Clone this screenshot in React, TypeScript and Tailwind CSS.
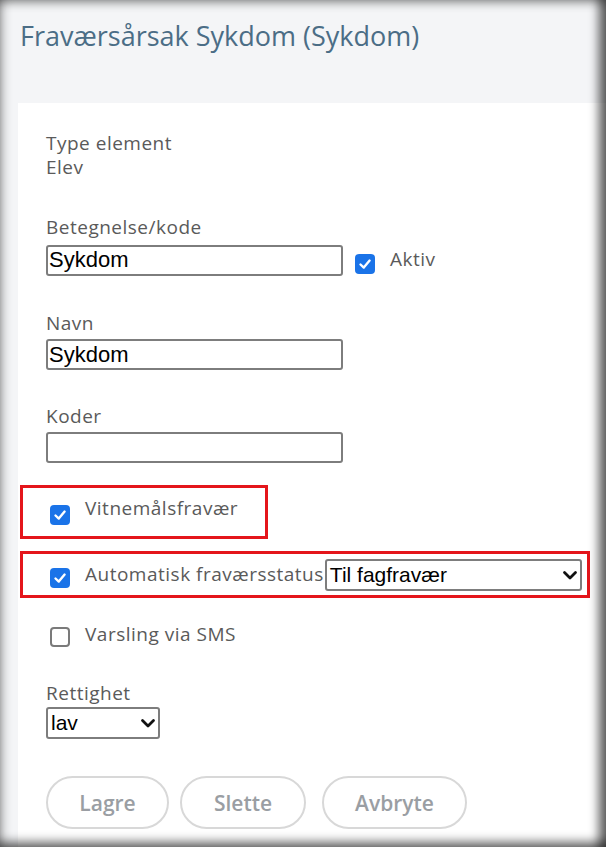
import React from 'react';

const font = { fontFamily: '"Open Sans", "Noto Sans", sans-serif' };
const arial = { fontFamily: '"Liberation Sans", Arial, sans-serif' };

function Check({ checked }: { checked: boolean }) {
    if (!checked) {
        return <span className="inline-block w-[20px] h-[20px] rounded-[4px] border-2 border-[#7a7a7a] bg-white shrink-0" />;
    }
    return (
        <span className="inline-flex items-center justify-center w-[20px] h-[20px] rounded-[4px] bg-[#1a73e8] shrink-0">
            <svg width="14" height="14" viewBox="0 0 14 14" fill="none">
                <path d="M2.5 7.5 L5.8 10.6 L11.6 3.6" stroke="white" strokeWidth="2.4" strokeLinecap="round" strokeLinejoin="round" />
            </svg>
        </span>
    );
}

function Chevron() {
    return (
        <svg width="16" height="12" viewBox="0 0 16 12" fill="none">
            <path d="M2.5 3.5 L8 9 L13.5 3.5" stroke="#111" strokeWidth="2.8" strokeLinecap="round" strokeLinejoin="round" />
        </svg>
    );
}

function TextBox({ value }: { value?: string }) {
    return (
        <div
            className="w-[297px] h-[31px] border-2 border-[#7d7d7d] rounded-[3px] bg-white flex items-center pl-[1px] text-[22px] text-black leading-none tracking-normal"
            style={arial}
        >
            {value}
        </div>
    );
}

export default function App() {
    return (
        <div className="relative w-[606px] h-[847px] bg-[#f4f5f7] overflow-hidden pl-[18px]" style={font}>
            {/* Header */}
            <h1 className="pt-[18px] pl-[2px] h-[103px] text-[27px] leading-[36px] text-[#4b6d86] font-normal">
                Fraværsårsak Sykdom (Sykdom)
            </h1>

            {/* Card */}
            <div className="bg-white h-[744px] text-[19px] leading-[24px] tracking-[0.5px] text-[#5a5a5a]">
                <div className="pl-[28px] pt-[28px]">
                    <p>Type element</p>
                    <p>Elev</p>

                    <p className="mt-[36px]">Betegnelse/kode</p>
                    <div className="mt-[5px] flex items-center">
                        <TextBox value="Sykdom" />
                        <span className="ml-[12px] mt-[8px]"><Check checked /></span>
                        <span className="ml-[15px] -mt-[2px]">Aktiv</span>
                    </div>

                    <p className="mt-[35px]">Navn</p>
                    <div className="mt-[4px]"><TextBox value="Sykdom" /></div>

                    <p className="mt-[34px]">Koder</p>
                    <div className="mt-[4px]"><TextBox /></div>
                </div>

                {/* Highlighted rows */}
                <div className="ml-[2px] mt-[22px] w-[248px] h-[54px] border-[3px] border-[#e4151b] flex items-start pl-[27px]">
                    <span className="mt-[15px]"><Check checked /></span>
                    <span className="ml-[15px] mt-[8px]">Vitnemålsfravær</span>
                </div>

                <div className="ml-[2px] mt-[12px] w-[570px] h-[47px] border-[3px] border-[#e4151b] flex items-start pl-[27px]">
                    <span className="mt-[12px]"><Check checked /></span>
                    <span className="ml-[15px] mt-[8px] whitespace-nowrap">Automatisk fraværsstatus</span>
                    <div
                        className="ml-[1px] mt-[5px] w-[257px] h-[32px] border-2 border-[#7d7d7d] rounded-[3px] bg-white flex items-center justify-between pl-[3px] pr-[2px] text-[21px] text-black tracking-normal"
                        style={arial}
                    >
                        <span>Til fagfravær</span>
                        <Chevron />
                    </div>
                </div>

                <div className="pl-[32px] mt-[29px] flex items-start">
                    <Check checked={false} />
                    <span className="ml-[15px] -mt-[5px]">Varsling via SMS</span>
                </div>

                <div className="pl-[28px]">
                    <p className="mt-[34px]">Rettighet</p>
                    <div
                        className="mt-[2px] w-[114px] h-[32px] border-2 border-[#7d7d7d] rounded-[3px] bg-white flex items-center justify-between pl-[3px] pr-[2px] text-[21px] text-black tracking-normal"
                        style={arial}
                    >
                        <span>lav</span>
                        <Chevron />
                    </div>

                    <div className="mt-[37px] flex gap-[11px] tracking-normal">
                        <button className="w-[123px] h-[53px] rounded-full border-2 border-[#d8d8d8] text-[21px] text-[#9a9ea3] font-semibold">Lagre</button>
                        <button className="w-[126px] h-[53px] rounded-full border-2 border-[#d8d8d8] text-[21px] text-[#9a9ea3] font-semibold">Slette</button>
                        <button className="w-[145px] h-[53px] rounded-full border-2 border-[#d8d8d8] text-[21px] text-[#9a9ea3] font-semibold ml-[5px]">Avbryte</button>
                    </div>
                </div>
            </div>

            {/* Screenshot frame shadow */}
            <div className="pointer-events-none absolute inset-0 shadow-[inset_-12px_0_10px_-4px_rgba(0,0,0,0.55),inset_10px_0_10px_-6px_rgba(0,0,0,0.22),inset_0_-10px_10px_-4px_rgba(0,0,0,0.5),inset_0_8px_8px_-4px_rgba(0,0,0,0.3)]" />
        </div>
    );
}
